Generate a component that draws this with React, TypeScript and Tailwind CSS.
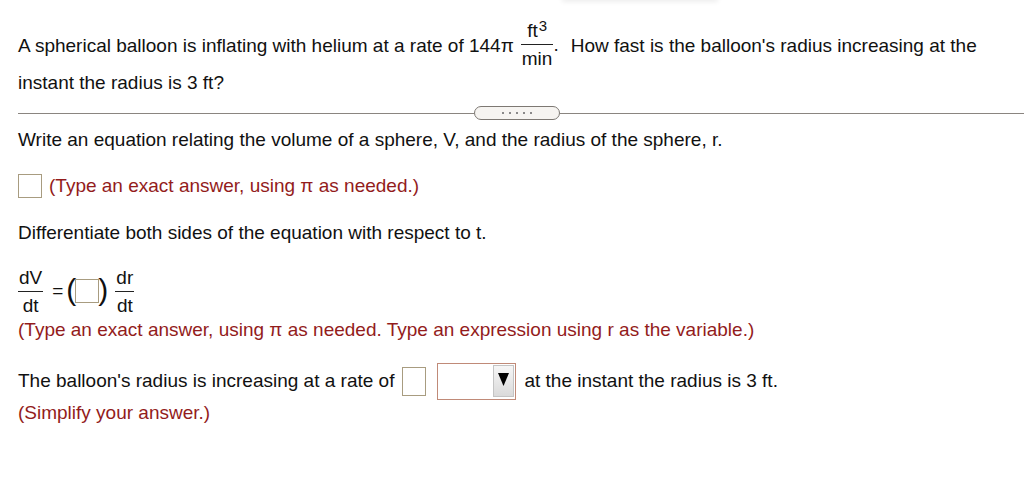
import React from "react";

const red = "text-[#931c1c]";

const Box = ({ className = "" }: { className?: string }) => (
  <span className={`inline-block w-[24px] border border-[#a89c80] bg-white ${className}`} />
);

const Frac = ({
  top,
  bottom,
  className = "",
}: {
  top: React.ReactNode;
  bottom: React.ReactNode;
  className?: string;
}) => (
  <span className={`inline-flex flex-col items-center leading-none ${className}`}>
    <span className="px-[1px] pb-[4px]">{top}</span>
    <span className="border-t border-[#222] px-[1px] pt-[4px] self-stretch text-center">
      {bottom}
    </span>
  </span>
);

const App: React.FC = () => {
  return (
    <div className="relative w-[1024px] h-[486px] bg-white overflow-hidden font-['Liberation_Sans',Arial,sans-serif] text-[19px] leading-[22px] text-[#111]">
      <div className="absolute top-[-10px] left-[562px] w-[156px] h-[10px] shadow-[0_2px_5px_rgba(0,0,0,0.07)]" />

      <div className="pl-[18px]">
        <div className="flex items-center h-[52px] mt-[20px] whitespace-nowrap">
          <span>A spherical balloon is inflating with helium at a rate of 144π</span>
          <Frac
            className="ml-[7px] mt-[-4px]"
            top={
              <span>
                ft<sup className="text-[15px] relative top-[-6px] ml-[1px]">3</sup>
              </span>
            }
            bottom={<span>min</span>}
          />
          <span className="mt-[-2px]">.</span>
          <span className="ml-[12px]">How fast is the balloon&apos;s radius increasing at the</span>
        </div>
        <div className="h-[22px]">instant the radius is 3 ft?</div>
      </div>

      <div className="flex items-center h-[14px] mt-[12px] pl-[18px]">
        <div className="h-px bg-[#8a8580] w-[456px]" />
        <div className="w-[86px] h-[14px] rounded-full border border-[#7d7873] bg-[#f6f4f1] flex items-center justify-center gap-[5px]">
          {[0, 1, 2, 3, 4].map((i) => (
            <span key={i} className="w-[2px] h-[2px] bg-[#666] rounded-full" />
          ))}
        </div>
        <div className="h-px bg-[#8a8580] flex-1" />
      </div>

      <div className="pl-[18px] whitespace-nowrap">
        <div className="h-[22px] mt-[9px]">
          Write an equation relating the volume of a sphere, V, and the radius of the sphere, r.
        </div>
        <div className="h-[24px] mt-[23px] flex items-center">
          <Box className="h-[24px]" />
          <span className={`ml-[7px] ${red}`}>(Type an exact answer, using π as needed.)</span>
        </div>
        <div className="h-[22px] mt-[24px]">
          Differentiate both sides of the equation with respect to t.
        </div>

        <div className="h-[46px] mt-[24px] flex items-center">
          <Frac top={<span>dV</span>} bottom={<span>dt</span>} />
          <span className="ml-[9px] mr-[3px]">=</span>
          <span className="text-[30px] leading-none font-light mt-[-3px]">(</span>
          <Box className="h-[24px] ml-[-1px] mr-[-1px]" />
          <span className="text-[30px] leading-none font-light mt-[-3px]">)</span>
          <Frac className="ml-[7px]" top={<span>dr</span>} bottom={<span>dt</span>} />
        </div>
        <div className={`h-[22px] mt-[5px] ${red}`}>
          (Type an exact answer, using π as needed. Type an expression using r as the variable.)
        </div>

        <div className="h-[38px] mt-[21px] flex items-center">
          <span>The balloon&apos;s radius is increasing at a rate of</span>
          <Box className="ml-[8px] h-[29px]" />
          <span className="ml-[11px] inline-flex items-start justify-end w-[79px] h-[37px] border border-[#c08a78] bg-white pr-[1px] pt-[1px]">
            <span className="w-[21px] h-[32px] bg-gradient-to-b from-[#f6f6f6] to-[#dadada] border border-[#c4c4c4] flex items-start justify-center pt-[7px]">
              <svg width="11" height="13" viewBox="0 0 11 13">
                <path d="M0 0 H11 L5.5 13 Z" fill="#000" />
              </svg>
            </span>
          </span>
          <span className="ml-[8px]">at the instant the radius is 3 ft.</span>
        </div>
        <div className={`h-[22px] mt-[2px] ${red}`}>(Simplify your answer.)</div>
      </div>
    </div>
  );
};

export default App;
